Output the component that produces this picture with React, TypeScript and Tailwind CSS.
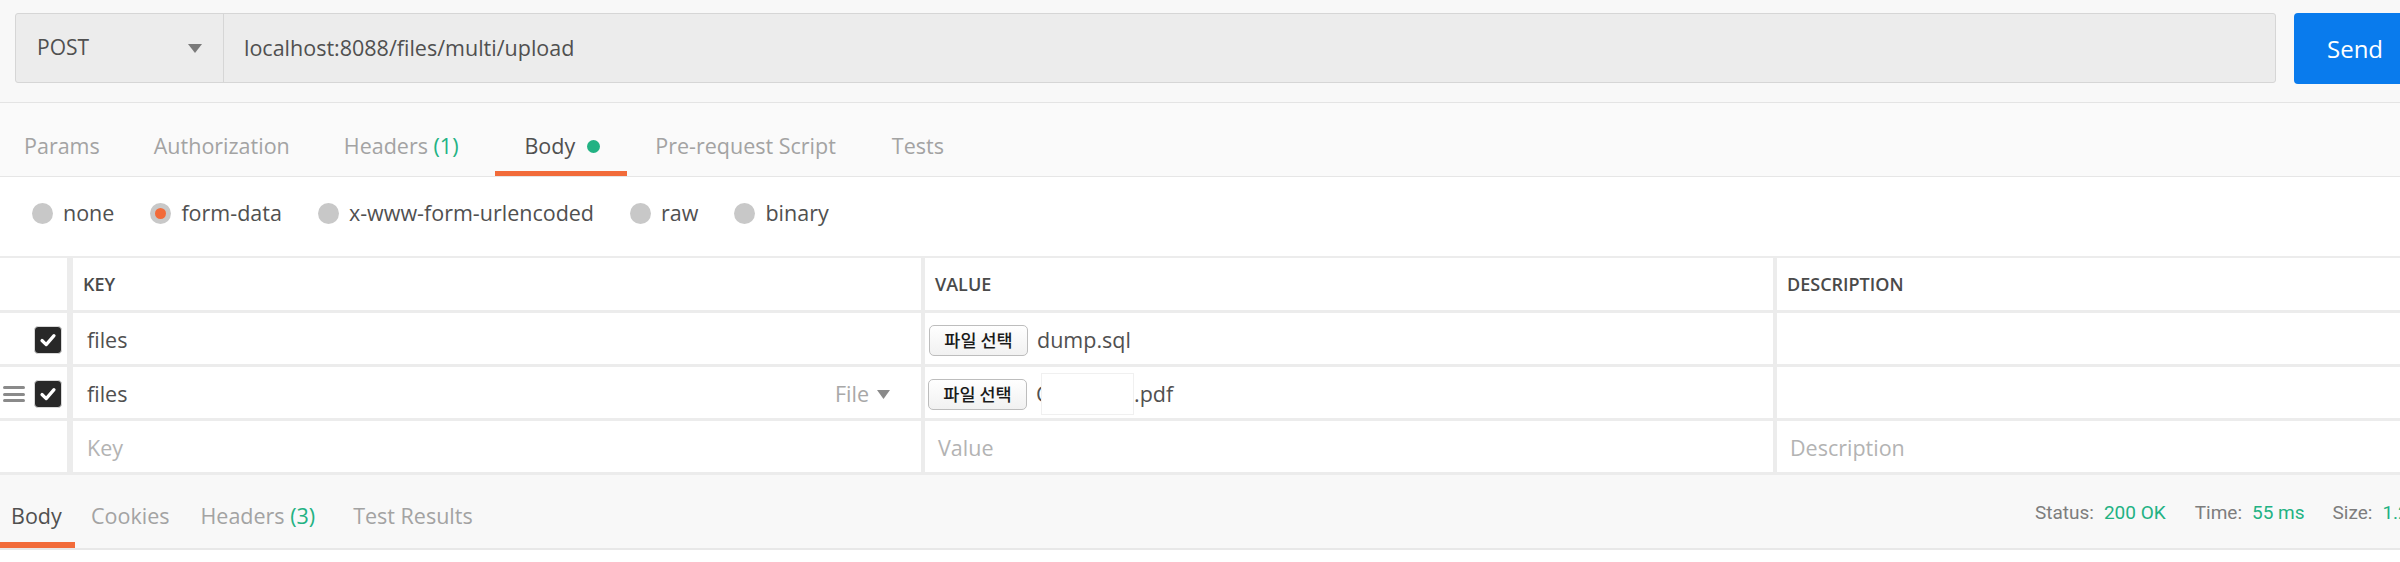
import React from "react";

const ORANGE = "bg-[#f26b3a]";

function Check() {
  return (
    <div className="flex h-[28px] w-[28px] items-center justify-center rounded-[4px] border border-[#d8d8d8] bg-[#282828]">
      <svg width="20" height="20" viewBox="0 0 20 20">
        <path d="M4 10.5 L8.2 14.6 L16 5.6" fill="none" stroke="#fff" strokeWidth="3.2" strokeLinecap="round" strokeLinejoin="round" />
      </svg>
    </div>
  );
}

function FileButton() {
  return (
    <div className="flex h-[31px] w-[99px] shrink-0 items-center justify-center rounded-[5px] border border-[#bdbdbd] bg-gradient-to-b from-white to-[#f1f1f1] font-['Noto_Sans_CJK_KR',sans-serif] text-[17.5px] font-medium leading-[20px] text-[#1a1a1a]">
      파일 선택
    </div>
  );
}

function Radio({ label, selected }: { label: string; selected?: boolean }) {
  return (
    <div className="flex h-[28px] items-center gap-[10px] text-[21.5px] text-[#505050]">
      <div className="flex h-[21px] w-[21px] items-center justify-center rounded-full bg-[#c8c8c8]">
        {selected && <div className={`h-[11px] w-[11px] rounded-full ${ORANGE}`} />}
      </div>
      <span>{label}</span>
    </div>
  );
}

export default function App() {
  const row = "grid grid-cols-[73px_852px_852px_1fr] border-b-[3px] border-[#ececec]";
  return (
    <div className="h-[562px] w-[2400px] overflow-hidden bg-white font-['Open_Sans',sans-serif] text-[#505050]">
      {/* Request bar */}
      <div className="flex h-[103px] items-start overflow-hidden border-b border-[#e4e4e4] bg-[#f8f8f8] pl-[15px] pt-[13px]">
        <div className="flex h-[70px] w-[2261px] shrink-0 rounded-[3px] border border-[#d6d6d6] bg-[#ececec]">
          <div className="flex w-[208px] items-center justify-between border-r border-[#d6d6d6] pl-[21px] pr-[21px]">
            <span className="text-[21px] text-[#505050]">POST</span>
            <svg width="14" height="9" viewBox="0 0 14 9">
              <path d="M0 0h14L7 9z" fill="#7a7a7a" />
            </svg>
          </div>
          <div className="flex items-center pl-[20px] text-[21.5px] text-[#505050]">localhost:8088/files/multi/upload</div>
        </div>
        <button className="ml-[18px] h-[71px] w-[130px] shrink-0 rounded-[4px] bg-[#097bed] pl-[33px] text-left text-[24px] text-white">
          Send
        </button>
      </div>

      {/* Request tabs */}
      <div className="flex h-[74px] border-b border-[#e6e6e6] bg-[#fafafa] text-[21.5px] text-[#a3a3a3]">
        <div className="relative h-full pl-[24px] pr-[27px] pt-[27px]">Params</div>
        <div className="relative h-full px-[27px] pt-[27px]">Authorization</div>
        <div className="relative h-full pl-[27px] pr-[37px] pt-[27px]">
          Headers <span className="text-[#22b283]">(1)</span>
        </div>
        <div className="relative flex h-full items-start gap-[12px] pl-[29px] pr-[27px] pt-[27px] text-[#505050]">
          <span>Body</span>
          <span className="mt-[10px] h-[13px] w-[13px] rounded-full bg-[#22b283]" />
          <div className={`absolute bottom-0 left-0 right-0 h-[5px] ${ORANGE}`} />
        </div>
        <div className="relative h-full px-[28px] pt-[27px]">Pre-request Script</div>
        <div className="relative h-full px-[28px] pt-[27px]">Tests</div>
      </div>

      {/* Body type radios */}
      <div className="flex h-[79px] items-start gap-[36px] pl-[32px] pt-[22px]">
        <Radio label="none" />
        <Radio label="form-data" selected />
        <Radio label="x-www-form-urlencoded" />
        <Radio label="raw" />
        <Radio label="binary" />
      </div>

      {/* Table */}
      <div className="border-t-2 border-[#ececec]">
        <div className={`${row} h-[55px] text-[18px] font-semibold text-[#4a4a4a]`}>
          <div className="border-r-[6px] border-[#ececec]" />
          <div className="flex items-center border-r-[4px] border-[#ececec] pl-[10px]">KEY</div>
          <div className="flex items-center border-r-[4px] border-[#ececec] pl-[10px]">VALUE</div>
          <div className="flex items-center pl-[10px]">DESCRIPTION</div>
        </div>

        <div className={`${row} h-[54px] text-[21.5px]`}>
          <div className="flex items-center justify-end border-r-[6px] border-[#ececec] pr-[5px] pt-[3px]">
            <Check />
          </div>
          <div className="flex items-center border-r-[4px] border-[#ececec] pl-[14px] pt-[3px]">files</div>
          <div className="flex items-center gap-[9px] border-r-[4px] border-[#ececec] pl-[4px] pt-[3px]">
            <FileButton />
            <span>dump.sql</span>
          </div>
          <div />
        </div>

        <div className={`${row} h-[54px] text-[21.5px]`}>
          <div className="flex items-center justify-between border-r-[6px] border-[#ececec] pl-[3px] pr-[5px] pt-[3px]">
            <div className="flex w-[22px] flex-col gap-[3.5px]">
              <div className="h-[3px] w-full rounded-full bg-[#8a8a8a]" />
              <div className="h-[3px] w-full rounded-full bg-[#8a8a8a]" />
              <div className="h-[3px] w-full rounded-full bg-[#8a8a8a]" />
            </div>
            <Check />
          </div>
          <div className="flex items-center justify-between border-r-[4px] border-[#ececec] pl-[14px] pr-[31px] pt-[3px]">
            <span>files</span>
            <span className="flex items-center gap-[8px] text-[#a8a8a8]">
              File
              <svg width="13" height="9" viewBox="0 0 13 9">
                <path d="M0 0h13L6.5 9z" fill="#8a8a8a" />
              </svg>
            </span>
          </div>
          <div className="flex items-center gap-[9px] border-r-[4px] border-[#ececec] pl-[3px] pt-[3px]">
            <FileButton />
            <div className="flex items-center">
              <span className="inline-block w-[5px] overflow-hidden">C</span>
              <span className="h-[42px] w-[93px] border border-[#f0f0f0] bg-white" />
              <span>.pdf</span>
            </div>
          </div>
          <div />
        </div>

        <div className={`${row} h-[54px] text-[21.5px] text-[#b3b3b3]`}>
          <div className="border-r-[6px] border-[#ececec]" />
          <div className="flex items-center border-r-[4px] border-[#ececec] pl-[14px] pt-[3px]">Key</div>
          <div className="flex items-center border-r-[4px] border-[#ececec] pl-[13px] pt-[3px]">Value</div>
          <div className="flex items-center pl-[13px] pt-[3px]">Description</div>
        </div>
      </div>

      {/* Response bar */}
      <div className="grid h-[75px] grid-cols-[2035px_1fr] border-b-2 border-[#e8e8e8] bg-[#f8f8f8]">
        <div className="flex h-full text-[21.5px] text-[#a3a3a3]">
          <div className="relative h-full w-[75px] pl-[11px] pt-[25px] text-[#505050]">
            Body
            <div className={`absolute bottom-0 left-0 right-0 h-[6px] ${ORANGE}`} />
          </div>
          <div className="ml-[16px] pt-[25px]">Cookies</div>
          <div className="ml-[31px] pt-[25px]">
            Headers <span className="text-[#22b283]">(3)</span>
          </div>
          <div className="ml-[38px] pt-[25px]">Test Results</div>
        </div>
        <div className="flex overflow-hidden whitespace-nowrap pt-[27px] font-['Roboto',sans-serif] text-[19px] leading-[22px] text-[#7d7d7d]">
          <span>Status:</span>
          <span className="ml-[10px] text-[#22b283]">200 OK</span>
          <span className="ml-[29px]">Time:</span>
          <span className="ml-[10px] text-[#22b283]">55 ms</span>
          <span className="ml-[28px]">Size:</span>
          <span className="ml-[10px] text-[#22b283]">1.2 KB</span>
        </div>
      </div>
    </div>
  );
}
